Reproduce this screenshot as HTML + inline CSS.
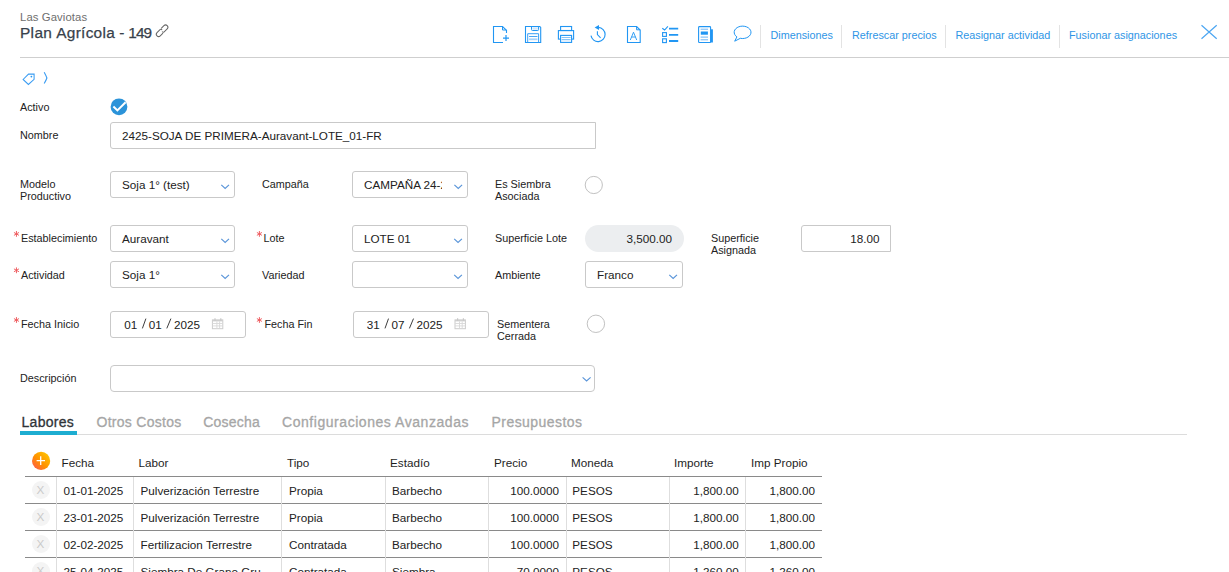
<!DOCTYPE html>
<html><head><meta charset="utf-8">
<style>
html,body{margin:0;padding:0;background:#fff;}
body{width:1229px;height:572px;overflow:hidden;position:relative;font-family:"Liberation Sans",sans-serif;color:#333;}
.t{position:absolute;white-space:nowrap;line-height:1;}
.lb{font-size:10.8px;color:#222;}
.in{font-size:11.7px;color:#222;}
.req{position:absolute;color:#e0262b;font-size:11px;line-height:1;}
.box{position:absolute;box-sizing:border-box;border:1px solid #c9c9c9;border-radius:3px;background:#fff;}
.lnk{font-size:10.8px;color:#2e95e6;}
.sep{position:absolute;width:1px;background:#e3e3e3;top:25px;height:23px;}
.sl{font-size:14px;color:#222;}
.tab{font-size:14px;color:#a6a6a6;-webkit-text-stroke:0.3px #a6a6a6;}
.th{font-size:11.7px;color:#1e1e1e;}
.td{font-size:11.7px;color:#222;}
svg.ov{position:absolute;left:0;top:0;}
</style></head>
<body>
<!-- header -->
<div class="t" style="left:20px;top:12px;font-size:11.3px;color:#6e6e6e;letter-spacing:0.1px;">Las Gaviotas</div>
<div class="t" style="left:19.9px;letter-spacing:0.4px;top:25px;font-size:15.4px;color:#38414b;-webkit-text-stroke:0.25px #38414b;">Plan</div><div class="t" style="left:56.3px;letter-spacing:0.28px;top:25px;font-size:15.4px;color:#38414b;-webkit-text-stroke:0.25px #38414b;">Agrícola</div><div class="t" style="left:119.2px;top:25px;font-size:15.4px;color:#38414b;-webkit-text-stroke:0.25px #38414b;">-</div><div class="t" style="left:128.3px;letter-spacing:-0.9px;top:25px;font-size:15.4px;color:#38414b;-webkit-text-stroke:0.25px #38414b;">149</div>
<div style="position:absolute;left:20px;right:0;top:57px;height:1px;background:#cfcfcf;"></div>

<div class="sep" style="left:760px"></div>
<div class="sep" style="left:841px"></div>
<div class="sep" style="left:945px"></div>
<div class="sep" style="left:1059px"></div>
<div class="t lnk" style="left:770.5px;top:30px;">Dimensiones</div>
<div class="t lnk" style="left:852px;top:30px;">Refrescar precios</div>
<div class="t lnk" style="left:955.5px;top:30px;">Reasignar actividad</div>
<div class="t lnk" style="left:1069px;top:30px;">Fusionar asignaciones</div>

<!-- labels -->
<div class="t lb" style="left:20px;top:102px;">Activo</div>
<div class="t lb" style="left:20px;top:130px;">Nombre</div>
<div class="t lb" style="left:20px;top:178px;line-height:12px;">Modelo<br>Productivo</div>
<div class="t lb" style="left:262px;top:179px;">Campaña</div>
<div class="t lb" style="left:495px;top:178px;line-height:12px;">Es Siembra<br>Asociada</div>

<div class="t lb" style="left:21px;top:233px;">Establecimiento</div>
<div class="t lb" style="left:263.5px;top:233px;">Lote</div>
<div class="t lb" style="left:495px;top:233px;">Superficie Lote</div>
<div class="t lb" style="left:711px;top:232px;line-height:12px;">Superficie<br>Asignada</div>

<div class="t lb" style="left:21px;top:270px;">Actividad</div>
<div class="t lb" style="left:262px;top:270px;">Variedad</div>
<div class="t lb" style="left:495px;top:270px;">Ambiente</div>

<div class="t lb" style="left:21px;top:319px;">Fecha Inicio</div>
<div class="t lb" style="left:264.4px;top:319px;">Fecha Fin</div>
<div class="t lb" style="left:497px;top:318px;line-height:12px;">Sementera<br>Cerrada</div>

<div class="t lb" style="left:20px;top:373px;">Descripción</div>

<!-- inputs -->
<div class="box" style="left:110px;top:122px;width:486px;height:27px;border-radius:3px 0 0 3px;"></div>
<div class="t in" style="left:122px;top:130px;">2425-SOJA DE PRIMERA-Auravant-LOTE_01-FR</div>

<div class="box" style="left:110px;top:171px;width:125px;height:27px;"></div>
<div class="t in" style="left:122px;top:179px;">Soja 1° (test)</div>
<div class="box" style="left:352px;top:171px;width:116px;height:27px;"></div>
<div class="t in" style="left:364px;top:179px;width:78px;overflow:hidden;">CAMPAÑA 24-25</div>

<div class="box" style="left:110px;top:225px;width:125px;height:27px;"></div>
<div class="t in" style="left:122px;top:233px;">Auravant</div>
<div class="box" style="left:352px;top:225px;width:116px;height:27px;"></div>
<div class="t in" style="left:364px;top:233px;">LOTE 01</div>
<div style="position:absolute;left:585px;top:225px;width:99px;height:27px;border-radius:14px;background:#eceef0;"></div>
<div class="t in" style="left:585px;top:233px;width:87px;text-align:right;">3,500.00</div>
<div class="box" style="left:801px;top:225px;width:90px;height:27px;border-radius:3px 0 0 3px;"></div>
<div class="t in" style="left:801px;top:233px;width:78.5px;text-align:right;">18.00</div>

<div class="box" style="left:110px;top:261px;width:125px;height:27px;"></div>
<div class="t in" style="left:122px;top:269px;">Soja 1°</div>
<div class="box" style="left:352px;top:261px;width:116px;height:27px;"></div>
<div class="box" style="left:585px;top:261px;width:98px;height:27px;"></div>
<div class="t in" style="left:597px;top:269px;">Franco</div>

<div class="box" style="left:110px;top:311px;width:136px;height:27px;"></div>
<div class="t in" style="left:124.2px;top:319px;">01</div>
<div class="t in" style="left:148.8px;top:319px;">01</div>
<div class="t in" style="left:173.9px;top:319px;">2025</div>
<div class="box" style="left:353px;top:311px;width:136px;height:27px;"></div>
<div class="t in" style="left:366.8px;top:319px;">31</div>
<div class="t in" style="left:391.4px;top:319px;">07</div>
<div class="t in" style="left:416.5px;top:319px;">2025</div>

<div class="box" style="left:110px;top:365px;width:485px;height:27px;border-radius:4px;"></div>

<!-- tabs -->
<div class="t tab" style="left:21.5px;top:415px;color:#2f3337;-webkit-text-stroke:0.3px #2f3337;letter-spacing:0.28px;">Labores</div>
<div class="t tab" style="left:96.5px;top:415px;letter-spacing:0.28px;">Otros Costos</div>
<div class="t tab" style="left:203.3px;top:415px;letter-spacing:0.19px;">Cosecha</div>
<div class="t tab" style="left:282px;top:415px;letter-spacing:0.55px;">Configuraciones Avanzadas</div>
<div class="t tab" style="left:491.5px;top:415px;letter-spacing:0.45px;">Presupuestos</div>
<div style="position:absolute;left:20px;top:434px;width:1167px;height:1px;background:#dcdcdc;"></div>
<div style="position:absolute;left:20px;top:431px;width:57px;height:4px;background:#1dadd1;"></div>

<!-- table header -->
<div class="t th" style="left:61.5px;top:457px;">Fecha</div>
<div class="t th" style="left:138.5px;top:457px;">Labor</div>
<div class="t th" style="left:287px;top:457px;">Tipo</div>
<div class="t th" style="left:390px;top:457px;">Estadío</div>
<div class="t th" style="left:494px;top:457px;">Precio</div>
<div class="t th" style="left:571px;top:457px;">Moneda</div>
<div class="t th" style="left:674px;top:457px;">Importe</div>
<div class="t th" style="left:751px;top:457px;">Imp Propio</div>

<div class="t td" style="left:63.5px;top:484.9px;">01-01-2025</div>
<div class="t td" style="left:140.5px;top:484.9px;width:136.0px;overflow:hidden;">Pulverización Terrestre</div>
<div class="t td" style="left:289.0px;top:484.9px;">Propia</div>
<div class="t td" style="left:392.0px;top:484.9px;">Barbecho</div>
<div class="t td" style="left:488.5px;top:484.9px;width:70.5px;text-align:right;">100.0000</div>
<div class="t td" style="left:572.3px;top:484.9px;">PESOS</div>
<div class="t td" style="left:669.0px;top:484.9px;width:69.7px;text-align:right;">1,800.00</div>
<div class="t td" style="left:745.0px;top:484.9px;width:70.0px;text-align:right;">1,800.00</div>
<div class="t td" style="left:63.5px;top:511.9px;">23-01-2025</div>
<div class="t td" style="left:140.5px;top:511.9px;width:136.0px;overflow:hidden;">Pulverización Terrestre</div>
<div class="t td" style="left:289.0px;top:511.9px;">Propia</div>
<div class="t td" style="left:392.0px;top:511.9px;">Barbecho</div>
<div class="t td" style="left:488.5px;top:511.9px;width:70.5px;text-align:right;">100.0000</div>
<div class="t td" style="left:572.3px;top:511.9px;">PESOS</div>
<div class="t td" style="left:669.0px;top:511.9px;width:69.7px;text-align:right;">1,800.00</div>
<div class="t td" style="left:745.0px;top:511.9px;width:70.0px;text-align:right;">1,800.00</div>
<div class="t td" style="left:63.5px;top:538.9px;">02-02-2025</div>
<div class="t td" style="left:140.5px;top:538.9px;width:136.0px;overflow:hidden;">Fertilizacion Terrestre</div>
<div class="t td" style="left:289.0px;top:538.9px;">Contratada</div>
<div class="t td" style="left:392.0px;top:538.9px;">Barbecho</div>
<div class="t td" style="left:488.5px;top:538.9px;width:70.5px;text-align:right;">100.0000</div>
<div class="t td" style="left:572.3px;top:538.9px;">PESOS</div>
<div class="t td" style="left:669.0px;top:538.9px;width:69.7px;text-align:right;">1,800.00</div>
<div class="t td" style="left:745.0px;top:538.9px;width:70.0px;text-align:right;">1,800.00</div>
<div class="t td" style="left:63.5px;top:565.9px;">25-04-2025</div>
<div class="t td" style="left:140.5px;top:565.9px;width:136.0px;overflow:hidden;">Siembra De Grano Gru</div>
<div class="t td" style="left:289.0px;top:565.9px;">Contratada</div>
<div class="t td" style="left:392.0px;top:565.9px;">Siembra</div>
<div class="t td" style="left:488.5px;top:565.9px;width:70.5px;text-align:right;">70.0000</div>
<div class="t td" style="left:572.3px;top:565.9px;">PESOS</div>
<div class="t td" style="left:669.0px;top:565.9px;width:69.7px;text-align:right;">1,260.00</div>
<div class="t td" style="left:745.0px;top:565.9px;width:70.0px;text-align:right;">1,260.00</div>


<svg class="ov" width="1229" height="572" viewBox="0 0 1229 572" >
<defs>
<linearGradient id="og" x1="1" y1="0" x2="0" y2="1">
<stop offset="0" stop-color="#ffd000"/><stop offset="0.55" stop-color="#ff9100"/><stop offset="1" stop-color="#ff4f5a"/>
</linearGradient>
</defs>
<!-- chain link -->
<g transform="translate(162.1 30.75) rotate(-45)" fill="none" stroke="#666" stroke-width="1" stroke-linecap="round">
<path d="M1.4,-2.3 H4.9 A2.3,2.3 0 0 1 4.9,2.3 H0.3 A1.3,1.3 0 0 1 -0.6,0.9"/>
<path d="M-1.4,2.3 H-4.9 A2.3,2.3 0 0 1 -4.9,-2.3 H-0.3 A1.3,1.3 0 0 1 0.6,-0.9"/>
</g>
<!-- toolbar icons -->
<g fill="none" stroke="#2196f3" stroke-width="1.1">
<!-- doc plus -->
<path d="M503,42.5 H493.5 V26.5 H502.5 L506.5,30.3 V33"/>
<path d="M502.5,26.8 V30 H506" stroke-width="1"/>
<path d="M503,38.1 H509 M506,35.1 V41.1" stroke-width="1.2"/>
<!-- save -->
<path d="M525.5,26.5 H539.8 L540.7,27.4 V42.5 H525.5 Z"/>
<path d="M531.5,26.8 V29.5 Q531.5,30.5 532.5,30.5 H537.8 Q538.6,30.5 538.6,29.5 V26.8" stroke-width="1"/>
<rect x="532.4" y="27.4" width="5.4" height="2.2" fill="#cfe6fc" stroke="none"/>
<path d="M527.7,42.3 V33.7 H538.6 V42.3" stroke="#3a9ff5" stroke-width="1"/>
<path d="M529,36.5 H537.5" stroke="#4aa6f5" stroke-width="1"/>
<path d="M529,39.3 H537.5" stroke="#a8d2fa" stroke-width="1.8"/>
<!-- printer -->
<rect x="560.6" y="26.5" width="11" height="4"/>
<rect x="558.4" y="30.6" width="15.2" height="8.5"/>
<rect x="560.6" y="35.4" width="11" height="7" fill="#fff"/>
<path d="M561.6,37.5 H570.6 M561.6,39.6 H570.6" stroke="#8ac4f6" stroke-width="1.1"/>
<!-- history -->
<path d="M591,35.7 A7.1,7.1 0 1 0 598.4,27.4" stroke-width="1.15"/>
<path d="M594.6,27.5 L599,24.9 V30.1 Z" fill="#2196f3" stroke="none"/>
<path d="M597.4,31.3 V34.6 L600.6,37.8" stroke-width="1.1"/>
<!-- doc A -->
<path d="M636.6,26.5 H627.5 V42.5 H640.2 V30.1 Z"/>
<path d="M636.6,26.8 V29.8 H640" stroke-width="1"/>
<path d="M630.3,40 L633.5,32.2 L636.7,40 M631.5,37 H635.5" stroke-width="0.9"/>
<!-- checklist -->
<path d="M662.3,28.2 L664.6,30 L667.9,26.3" stroke-width="1.1"/>
<rect x="662.6" y="32.6" width="3.8" height="3.8"/>
<rect x="662.6" y="38.8" width="3.8" height="3.8"/>
<path d="M669,28.7 H678.2 M669,34.9 H678.2 M669,41 H678.2" stroke-width="1.8"/>
<!-- newspaper -->
<rect x="710" y="29.3" width="2.9" height="13.2" fill="#2196f3" stroke="none"/>
<rect x="698.6" y="26.6" width="12" height="15.9" rx="0.8" fill="#fff"/>
<path d="M700.6,29.2 H708 M700.6,37.1 H708 M700.6,39.8 H708" stroke="#6fb6f5" stroke-width="1"/>
<rect x="700.8" y="31.5" width="7.1" height="3.2" fill="#2196f3" stroke="none"/>
<!-- comment -->
<path d="M736.9,36.9 L734.7,41.2 L740.3,38.3 A8.4,6.2 0 1 0 736.9,36.9 Z" stroke-width="1"/>
</g>
<!-- close X -->
<path d="M1201.5,25.3 L1216.7,38.8 M1216.7,25.3 L1201.5,38.8" stroke="#4ca6f2" stroke-width="1.2" fill="none"/>
<!-- tag + chevron -->
<g fill="none" stroke="#3a9cf2" stroke-width="1.05">
<path d="M23.1,79.5 L28.5,74.1 H34.1 V79.3 L28.4,84.5 Z"/>
<path d="M44.2,72.3 Q46.3,76.2 46.9,78 Q46.3,79.8 44.2,83.6" stroke-width="1.1"/>
</g>
<circle cx="31.4" cy="76.6" r="0.9" fill="#2196f3"/>

<!-- asterisks -->
<path d="M16.45,231.00 L16.45,236.80 M13.94,232.45 L18.96,235.35 M18.96,232.45 L13.94,235.35" stroke="#ee5a5e" stroke-width="0.95" fill="none"/>
<path d="M16.45,267.40 L16.45,273.20 M13.94,268.85 L18.96,271.75 M18.96,268.85 L13.94,271.75" stroke="#ee5a5e" stroke-width="0.95" fill="none"/>
<path d="M16.45,317.10 L16.45,322.90 M13.94,318.55 L18.96,321.45 M18.96,318.55 L13.94,321.45" stroke="#ee5a5e" stroke-width="0.95" fill="none"/>
<path d="M259.40,231.00 L259.40,236.80 M256.89,232.45 L261.91,235.35 M261.91,232.45 L256.89,235.35" stroke="#ee5a5e" stroke-width="0.95" fill="none"/>
<path d="M259.40,317.10 L259.40,322.90 M256.89,318.55 L261.91,321.45 M261.91,318.55 L256.89,321.45" stroke="#ee5a5e" stroke-width="0.95" fill="none"/>
<!-- checkbox -->
<circle cx="119" cy="106.8" r="8.4" fill="#2b93d9"/>
<path d="M113.4,106.5 L117.4,110.4 L125.6,102.3" stroke="#fff" stroke-width="2" fill="none"/>
<!-- radios -->
<circle cx="593.8" cy="185" r="8.6" stroke="#c2c2c2" stroke-width="1" fill="none"/>
<circle cx="595.9" cy="323.8" r="8.7" stroke="#c2c2c2" stroke-width="1" fill="none"/>
<!-- select chevrons -->
<g fill="none" stroke="#5a95d9" stroke-width="1.2">
<path d="M221.30,184.90 L225.15,188.40 L229.00,184.90"/>
<path d="M454.40,184.90 L458.25,188.40 L462.10,184.90"/>
<path d="M221.30,238.90 L225.15,242.40 L229.00,238.90"/>
<path d="M454.20,238.90 L458.05,242.40 L461.90,238.90"/>
<path d="M221.30,274.90 L225.15,278.40 L229.00,274.90"/>
<path d="M454.20,274.90 L458.05,278.40 L461.90,274.90"/>
<path d="M669.30,274.90 L673.15,278.40 L677.00,274.90"/>
<path d="M582.60,377.40 L586.60,380.90 L590.60,377.40"/>
</g>
<!-- calendars -->
<rect x="212.4" y="319.9" width="10.4" height="8.8" fill="none" stroke="#cccccc" stroke-width="1"/>
<rect x="212.4" y="319.9" width="10.4" height="1.5" fill="#cfcfcf"/>
<path d="M216.9,321.4 V328.7 M219.6,321.4 V328.7 M212.4,323.5 H222.8 M212.4,325.9 H222.8" stroke="#d8d8d8" stroke-width="0.9" fill="none"/>
<path d="M215.0,318.3 V320.7 M220.8,318.3 V320.7" stroke="#c8c8c8" stroke-width="1.2" fill="none"/>
<rect x="455.0" y="319.9" width="10.4" height="8.8" fill="none" stroke="#cccccc" stroke-width="1"/>
<rect x="455.0" y="319.9" width="10.4" height="1.5" fill="#cfcfcf"/>
<path d="M459.5,321.4 V328.7 M462.2,321.4 V328.7 M455.0,323.5 H465.4 M455.0,325.9 H465.4" stroke="#d8d8d8" stroke-width="0.9" fill="none"/>
<path d="M457.6,318.3 V320.7 M463.4,318.3 V320.7" stroke="#c8c8c8" stroke-width="1.2" fill="none"/>
<!-- slashes -->
<path d="M142.4,328.4 L145.9,318.6 M166.8,328.4 L170.9,318.6 M385,328.4 L388.5,318.6 M409.4,328.4 L413.5,318.6" stroke="#333" stroke-width="0.95" fill="none"/>
<!-- orange plus -->
<circle cx="41.1" cy="460.9" r="9.1" fill="url(#og)"/>
<path d="M36.6,460.6 H45 M40.7,456.3 V465" stroke="#fff" stroke-width="1.3"/>
<!-- table lines -->
<g fill="#8a8a8a">
<rect x="25" y="476" width="797" height="1"/>
<rect x="25" y="503" width="797" height="1"/>
<rect x="25" y="530" width="797" height="1"/>
<rect x="25" y="557" width="797" height="1"/>
</g>
<g fill="#dedede">
<rect x="56" y="477" width="1" height="95"/>
<rect x="133" y="477" width="1" height="95"/>
<rect x="281" y="477" width="1" height="95"/>
<rect x="385" y="477" width="1" height="95"/>
<rect x="488" y="477" width="1" height="95"/>
<rect x="566" y="477" width="1" height="95"/>
<rect x="669" y="477" width="1" height="95"/>
<rect x="745" y="477" width="1" height="95"/>
</g>
<!-- x buttons -->
<g>
<circle cx="41" cy="490" r="9" fill="#f4f4f4"/>
<circle cx="41" cy="517" r="9" fill="#f4f4f4"/>
<circle cx="41" cy="544" r="9" fill="#f4f4f4"/>
<circle cx="41" cy="571" r="9" fill="#f4f4f4"/>
</g>
</svg>
<div class="t" style="left:36.5px;top:484.2px;font-size:11.7px;color:#cacaca;">X</div>
<div class="t" style="left:36.5px;top:511.2px;font-size:11.7px;color:#cacaca;">X</div>
<div class="t" style="left:36.5px;top:538.2px;font-size:11.7px;color:#cacaca;">X</div>
<div class="t" style="left:36.5px;top:565.2px;font-size:11.7px;color:#cacaca;">X</div>
</body></html>
